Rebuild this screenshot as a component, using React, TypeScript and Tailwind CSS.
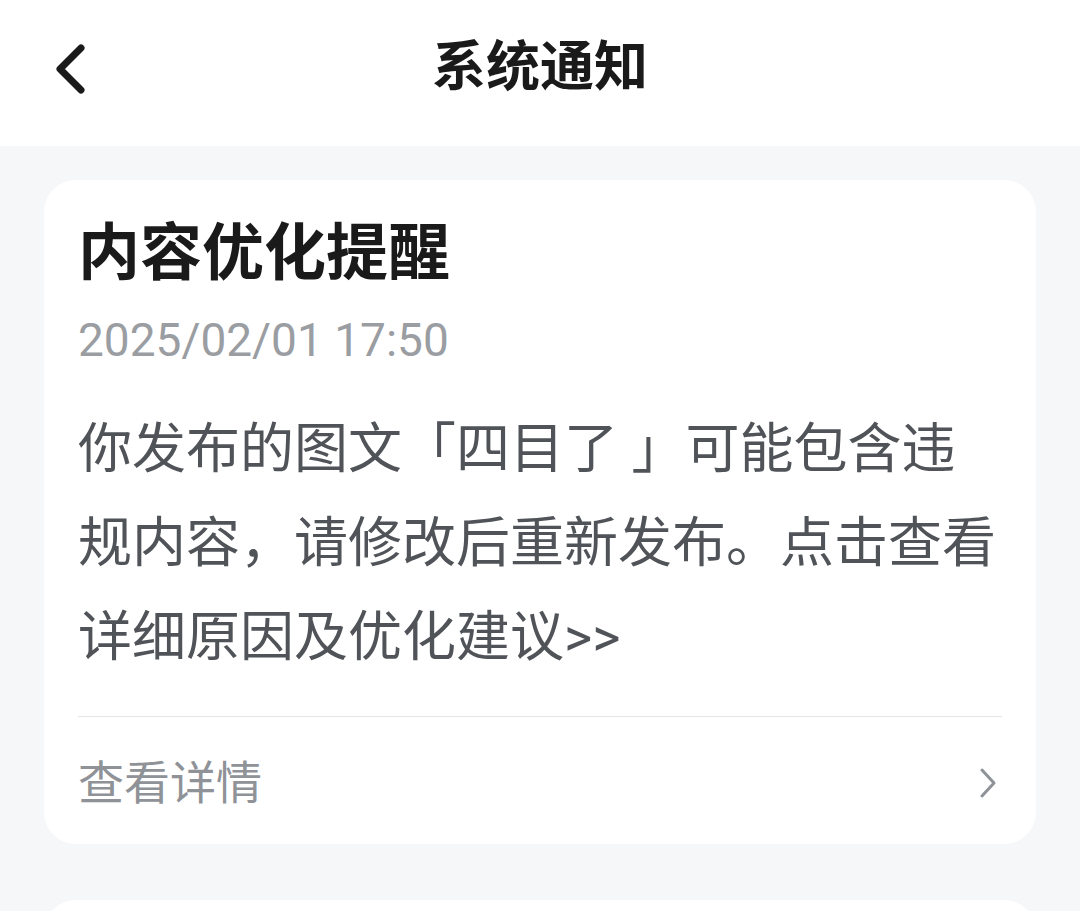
import React from 'react';

const font = { fontFamily: 'Roboto, "Noto Sans CJK SC", sans-serif' };

function BackIcon() {
  return (
    <svg width="40" height="56" viewBox="0 0 40 56" fill="none">
      <path d="M31 7 L10 28 L31 49" stroke="#1a1a1a" strokeWidth="7" strokeLinecap="round" strokeLinejoin="round" />
    </svg>
  );
}

function ChevronRight() {
  return (
    <svg width="24" height="36" viewBox="0 0 24 36" fill="none">
      <path d="M6 5 L18 18 L6 31" stroke="#8f9296" strokeWidth="3" strokeLinecap="round" strokeLinejoin="round" />
    </svg>
  );
}

export default function App() {
  return (
    <div className="w-[1080px] h-[911px] overflow-hidden bg-[#f6f7f9] flex flex-col" style={font}>
      {/* HEADER */}
      <div className="h-[146px] shrink-0 bg-white relative flex items-center justify-center">
        <div className="absolute left-[50px] top-[41px]"><BackIcon /></div>
        <span className="text-[54px] leading-none font-bold text-[#1a1a1a] -mt-[10px]">系统通知</span>
      </div>

      {/* LIST */}
      <div className="flex flex-col gap-[56px] px-[44px] pt-[34px]">
        <div className="bg-white rounded-[32px] px-[34px] pt-[37px] flex flex-col">
          <div className="text-[62px] leading-[74px] font-bold text-[#1a1a1a]">内容优化提醒</div>
          <div className="mt-[19px] text-[46px] leading-[60px] text-[#9a9da2]">2025/02/01 17:50</div>
          <div className="mt-[33px] text-[54px] leading-[94px] text-[#505358]">
            你发布的图文「四目了 」可能包含违规内容，请修改后重新发布。点击查看详细原因及优化建议&gt;&gt;
          </div>
          <div className="mt-[31px] h-px bg-[#e6e6e6]" />
          <div className="h-[127px] pt-[5px] flex items-center justify-between">
            <span className="text-[46px] leading-none text-[#8f9297]">查看详情</span>
            <div className="mr-[2px]"><ChevronRight /></div>
          </div>
        </div>
        <div className="bg-white rounded-[32px] h-[200px]" />
      </div>
    </div>
  );
}
